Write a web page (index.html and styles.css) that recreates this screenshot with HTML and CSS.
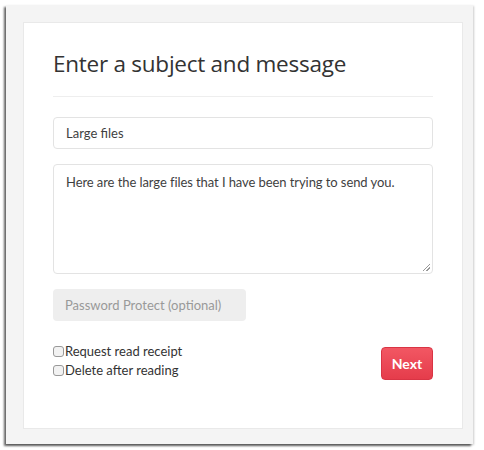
FILE: index.html
```html
<!DOCTYPE html>
<html>
<head>
<meta charset="utf-8">
<link rel="stylesheet" href="styles.css">
</head>
<body>
<div class="frame">
  <div class="panel">
    <h1 class="title">Enter a subject and message</h1>
    <div class="divider"></div>
    <div class="field">Large files</div>
    <div class="area">Here are the large files that I have been trying to send you.<span class="grip"></span></div>
    <div class="pw">Password Protect (optional)</div>
    <div class="bottom">
      <div class="checks">
        <label class="check"><span class="box"></span>Request read receipt</label>
        <label class="check"><span class="box"></span>Delete after reading</label>
      </div>
      <button class="next">Next</button>
    </div>
  </div>
</div>
</body>
</html>
```
FILE: styles.css
```css
html, body { margin: 0; padding: 0; background: #fff; }
body { width: 484px; height: 450px; font-family: "Open Sans", sans-serif; }
.frame {
  margin: 5px 0 0 6px;
  width: 467px;
  height: 439px;
  box-sizing: border-box;
  background: #f4f4f4;
  padding: 17px 10px 15px 17px;
  box-shadow: -2px 2px 2px rgba(0,0,0,0.6), 1px 1px 2px rgba(0,0,0,0.2);
}
.panel {
  background: #fff;
  border: 1px solid #e9e9e9;
  height: 100%;
  box-sizing: border-box;
  padding: 0 29px 0 29px;
}
.title {
  margin: 26px 0 0 0;
  font-family: "Open Sans", sans-serif;
  font-weight: 400;
  font-size: 22.5px;
  line-height: 30px;
  color: #333;
  letter-spacing: -0.25px;
}
.divider { height: 1px; background: #eee; margin-top: 17px; }
.field, .area, .pw {
  font-family: "Lato", sans-serif;
  font-size: 13px;
  color: #3f3f3f;
  box-sizing: border-box;
  border-radius: 4px;
}
.field {
  margin-top: 20px;
  height: 32px;
  border: 1px solid #e3e3e3;
  padding: 0 12px;
  line-height: 30px;
}
.area {
  position: relative;
  margin-top: 15px;
  height: 110px;
  border: 1px solid #e3e3e3;
  padding: 8px 12px;
  line-height: 18px;
  letter-spacing: -0.08px;
}
.grip {
  position: absolute;
  right: 2px; bottom: 2px;
  width: 7px; height: 7px;
  background: linear-gradient(135deg, transparent 45%, #999 45%, #999 55%, transparent 55%, transparent 70%, #999 70%, #999 80%, transparent 80%);
}
.pw {
  margin-top: 15px;
  width: 193px;
  height: 32px;
  background: #eee;
  color: #999;
  padding: 0 12px;
  line-height: 32px;
}
.bottom {
  margin-top: 21px;
  display: flex;
  justify-content: space-between;
  align-items: flex-start;
}
.checks { display: flex; flex-direction: column; }
.check {
  display: flex;
  align-items: center;
  font-family: "Lato", sans-serif;
  font-size: 13px;
  color: #333;
  line-height: 19px;
}
.box {
  width: 9px; height: 9px;
  border: 1px solid #999;
  border-radius: 3px;
  background: #f2f2f2;
  margin-right: 1px;
}
.next {
  margin-top: 5px;
  width: 52px;
  height: 33px;
  border: 1px solid #d93444;
  border-radius: 4px;
  background: linear-gradient(#f25763, #e53c4b);
  color: #fff;
  font-family: "Lato", sans-serif;
  font-weight: 700;
  font-size: 14px;
  padding: 0;
}
```
